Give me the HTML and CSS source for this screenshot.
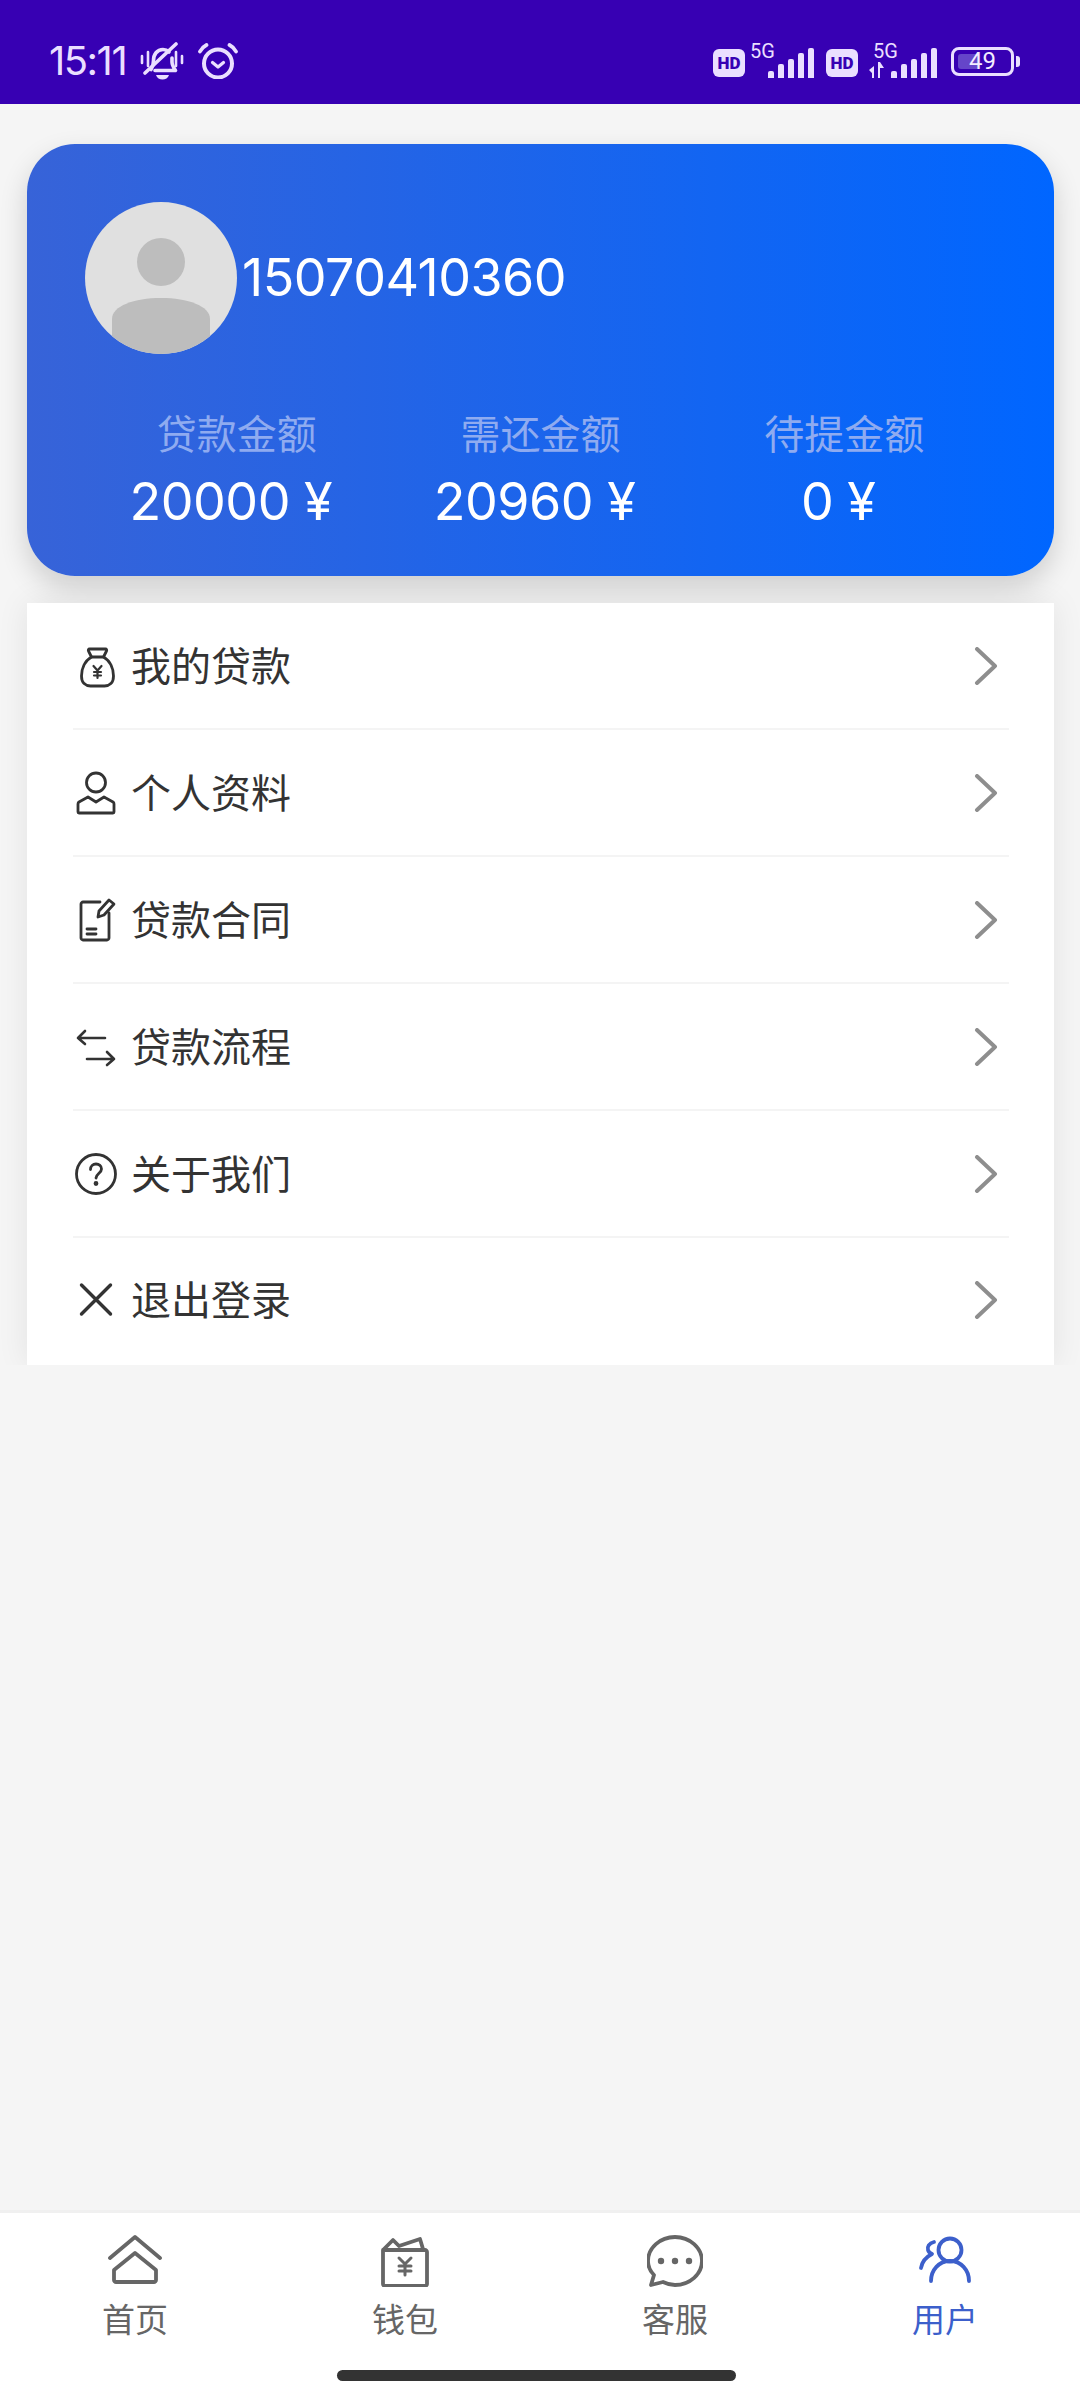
FILE: index.html
```html
<!DOCTYPE html>
<html lang="zh-CN">

<head>
  <meta charset="UTF-8">
  <meta name="viewport" content="width=device-width, initial-scale=1.0">
  <title>用户</title>
  <link rel="stylesheet" href="styles.css">
</head>

<body>

  <!-- status bar -->
  <header class="status-bar">
    <div class="status-left">
      <span class="time">15:11</span>
      <svg class="icon-bell" viewBox="0 0 44 38" fill="none" stroke="currentColor" stroke-width="3.6" stroke-linecap="round" stroke-linejoin="round">
        <path d="M11 27.5c2-3 2.5-5 2.5-9 0-6 3.5-11 9.5-11 2.5 0 4.500 1 6 2.500M32 16v4c0 3 1.500 5.500 3.500 8.500H15" />
        <path d="M5 31 36 2" />
        <path d="M2 14v7M8 10v14M36 10v14M42 14v7" stroke-width="2.6" />
        <path d="M16 33h13c-1 3-3.500 4.500-6.500 4.500s-5.500-1.500-6.500-4.500z" fill="currentColor" stroke="none" />
      </svg>
      <svg class="icon-alarm" viewBox="0 0 40 36" fill="none" stroke="currentColor" stroke-linecap="round" stroke-linejoin="round">
        <circle cx="20" cy="20.5" r="14" stroke-width="4" />
        <path d="M14.500 19.500 20 24l5.500-4.500" stroke-width="3.2" />
        <path d="M2 8.500C3.500 5.500 5.500 3.500 8.500 2M38 8.500C36.500 5.500 34.500 3.500 31.500 2" stroke-width="3.8" />
      </svg>
    </div>
    <div class="status-right">
      <span class="hd-badge">HD</span>
      <span class="net net-first">
        <span class="net-label">5G</span>
        <span class="signal">
          <i class="bar bar-1"></i><i class="bar bar-2"></i><i class="bar bar-3"></i><i class="bar bar-4"></i><i class="bar bar-5"></i>
        </span>
      </span>
      <span class="hd-badge">HD</span>
      <span class="net net-second">
        <span class="net-label">5G</span>
        <svg class="net-arrows" viewBox="0 0 15 16" fill="currentColor">
          <path d="M0 8l5-4v12H3V11zM9 0h2l4 6H11v10H9z" />
        </svg>
        <span class="signal">
          <i class="bar bar-1"></i><i class="bar bar-2"></i><i class="bar bar-3"></i><i class="bar bar-4"></i><i class="bar bar-5"></i>
        </span>
      </span>
      <span class="battery">
        <span class="battery-body">
          <span class="battery-level"></span>
          <span class="battery-text">49</span>
        </span>
        <span class="battery-cap"></span>
      </span>
    </div>
  </header>

  <main class="content">
    <!-- user card -->
    <section class="user-card">
      <div class="user-head">
        <svg class="avatar" viewBox="0 0 152 152">
          <defs>
            <clipPath id="avatarClip">
              <circle cx="76" cy="76" r="76" />
            </clipPath>
          </defs>
          <circle cx="76" cy="76" r="76" fill="#e0e0e0" />
          <g clip-path="url(#avatarClip)" fill="#bdbdbd">
            <ellipse cx="76" cy="60" rx="24" ry="24" />
            <path d="M27 152v-35c0-13 22-21 49-21s49 8 49 21v35z" />
          </g>
        </svg>
        <span class="phone">15070410360</span>
      </div>
      <div class="stats">
        <div class="stat">
          <span class="stat-label">贷款金额</span>
          <span class="stat-value">20000 ¥</span>
        </div>
        <div class="stat">
          <span class="stat-label">需还金额</span>
          <span class="stat-value">20960 ¥</span>
        </div>
        <div class="stat">
          <span class="stat-label">待提金额</span>
          <span class="stat-value">0 ¥</span>
        </div>
      </div>
    </section>

    <!-- menu -->
    <ul class="menu">
      <li class="menu-row">
        <svg class="menu-icon" viewBox="0 0 46 46" fill="none" stroke="#333" stroke-width="2.8" stroke-linecap="round" stroke-linejoin="round">
          <g transform="translate(1.5 2)">
            <path d="M15 4h16c1 0 1.500 1 1 2l-3 6H17l-3-6c-.5-1 0-2 1-2z" />
            <path d="M17 12C10 16 7 24 7 31c0 7 4 10 9 10h14c5 0 9-3 9-10 0-7-3-15-10-19" />
            <path d="M19 21l4 4.500 4-4.500M23 25.500V33M19.500 27h7M19.500 30.500h7" stroke-width="2.2" />
          </g>
        </svg>
        <span class="menu-text">我的贷款</span>
        <svg class="menu-arrow" viewBox="0 0 24 38" fill="none" stroke="#8e8e8e" stroke-width="4" stroke-linecap="round" stroke-linejoin="round">
          <path d="M3 2l18 17L3 36" />
        </svg>
      </li>
      <li class="menu-row">
        <svg class="menu-icon" viewBox="0 0 46 46" fill="none" stroke="#333" stroke-width="2.8" stroke-linecap="round" stroke-linejoin="round">
          <circle cx="23" cy="12.5" r="9.5" />
          <path d="M15 27 6 32c-.6.4-1 1-1 2v8c0 .6.4 1 1 1h34c.6 0 1-.4 1-1v-8c0-1-.4-1.600-1-2l-9-5-8 5z" />
        </svg>
        <span class="menu-text">个人资料</span>
        <svg class="menu-arrow" viewBox="0 0 24 38" fill="none" stroke="#8e8e8e" stroke-width="4" stroke-linecap="round" stroke-linejoin="round">
          <path d="M3 2l18 17L3 36" />
        </svg>
      </li>
      <li class="menu-row">
        <svg class="menu-icon" viewBox="0 0 46 46" fill="none" stroke="#333" stroke-width="2.8" stroke-linecap="round" stroke-linejoin="round">
          <path d="M27 5H10c-1 0-2 1-2 2v34c0 1 1 2 2 2h24c1 0 2-1 2-2V16" />
          <path d="M25 20l1-6L36 3l5 4-10 11z" />
          <path d="M14 32h9M14 37h9" />
        </svg>
        <span class="menu-text">贷款合同</span>
        <svg class="menu-arrow" viewBox="0 0 24 38" fill="none" stroke="#8e8e8e" stroke-width="4" stroke-linecap="round" stroke-linejoin="round">
          <path d="M3 2l18 17L3 36" />
        </svg>
      </li>
      <li class="menu-row">
        <svg class="menu-icon" viewBox="0 0 46 46" fill="none" stroke="#333" stroke-width="2.6" stroke-linecap="round" stroke-linejoin="round">
          <path d="M5 14h27M12 7l-7 7 7 6" />
          <path d="M14 35h27M34 28l7 7-7 6" />
        </svg>
        <span class="menu-text">贷款流程</span>
        <svg class="menu-arrow" viewBox="0 0 24 38" fill="none" stroke="#8e8e8e" stroke-width="4" stroke-linecap="round" stroke-linejoin="round">
          <path d="M3 2l18 17L3 36" />
        </svg>
      </li>
      <li class="menu-row">
        <svg class="menu-icon" viewBox="0 0 46 46" fill="none" stroke="#333" stroke-width="2.8" stroke-linecap="round" stroke-linejoin="round">
          <circle cx="23" cy="23" r="19.5" />
          <path d="M17.500 18.500c0-3.500 2.500-5.500 5.500-5.500s5.500 2 5.500 5c0 4-5 4.500-5.500 9" />
          <circle cx="23" cy="32.5" r="1" fill="#333" />
        </svg>
        <span class="menu-text">关于我们</span>
        <svg class="menu-arrow" viewBox="0 0 24 38" fill="none" stroke="#8e8e8e" stroke-width="4" stroke-linecap="round" stroke-linejoin="round">
          <path d="M3 2l18 17L3 36" />
        </svg>
      </li>
      <li class="menu-row">
        <svg class="menu-icon" viewBox="0 0 46 46" fill="none" stroke="#333" stroke-width="3.4" stroke-linecap="round" stroke-linejoin="round">
          <path d="M8.500 8 37.500 37M37.500 8 8.500 37" />
        </svg>
        <span class="menu-text">退出登录</span>
        <svg class="menu-arrow" viewBox="0 0 24 38" fill="none" stroke="#8e8e8e" stroke-width="4" stroke-linecap="round" stroke-linejoin="round">
          <path d="M3 2l18 17L3 36" />
        </svg>
      </li>
    </ul>
  </main>

  <!-- bottom tabs -->
  <nav class="tabbar">
    <a class="tab">
      <svg class="tab-icon" viewBox="0 0 56 52" fill="none" stroke="currentColor" stroke-width="3.8" stroke-linecap="round" stroke-linejoin="round">
        <path d="M3 23 28 2l25 21" />
        <path d="M7 35 28 18l21 17v10c0 1-1 2-2 2H9c-1 0-2-1-2-2z" />
      </svg>
      <span>首页</span>
    </a>
    <a class="tab">
      <svg class="tab-icon" viewBox="0 0 56 52" fill="none" stroke="currentColor" stroke-width="3.8" stroke-linecap="round" stroke-linejoin="round">
        <path d="M6 15h42c1 0 2 1 2 2v32c0 1-1 2-2 2H8c-1 0-2-1-2-2z" />
        <path d="M7 14l9-9 6 6 21-7 3 10" />
        <path d="M22 23l6 6 6-6M28 29v11M22 31h12M22 36h12" stroke-width="3" />
      </svg>
      <span>钱包</span>
    </a>
    <a class="tab">
      <svg class="tab-icon" viewBox="0 0 56 52" fill="none" stroke="currentColor" stroke-width="3.8" stroke-linecap="round" stroke-linejoin="round">
        <path d="M4 50l3-10C3 36 1 31 1 26 1 13 13 2 28 2s27 11 27 24-12 24-27 24c-4 0-8-1-12-3z" />
        <circle cx="14" cy="26" r="3.2" fill="currentColor" stroke="none" />
        <circle cx="28" cy="26" r="3.2" fill="currentColor" stroke="none" />
        <circle cx="42" cy="26" r="3.2" fill="currentColor" stroke="none" />
      </svg>
      <span>客服</span>
    </a>
    <a class="tab tab-on">
      <svg class="tab-icon" viewBox="0 0 56 52" fill="none" stroke="currentColor" stroke-width="3.8" stroke-linecap="round" stroke-linejoin="round">
        <circle cx="33" cy="15" r="11.5" />
        <path d="M14 46c0-11 8-20 19-20s19 9 19 20" />
        <path d="M17 7c-5 1-7 5-6 8 .5 2 2 3 4 4-6 3-10 8-11 14" />
      </svg>
      <span>用户</span>
    </a>
    <div class="home-bar"></div>
  </nav>

</body>

</html>
```

FILE: styles.css
```css
* {
  box-sizing: border-box;
}

html,
body {
  margin: 0;
  padding: 0;
}

body {
  width: 1080px;
  height: 2400px;
  display: flex;
  flex-direction: column;
  overflow: hidden;
  background: #f5f5f5;
  font-family: "Roboto", "Noto Sans CJK SC", sans-serif;
  color: #333;
}

ul,
li {
  list-style: none;
  margin: 0;
  padding: 0;
}

/* 状态栏 */
.status-bar {
  height: 104px;
  flex: none;
  padding: 18px 60px 0 49px;
  display: flex;
  justify-content: space-between;
  align-items: center;
  background: #3700b3;
  color: #eadfff;
}

.status-left {
  display: flex;
  align-items: center;
}

.time {
  width: 89px;
  font-family: "Inter", sans-serif;
  font-size: 40px;
  letter-spacing: -1.5px;
  line-height: 44px;
}

.icon-bell {
  width: 44px;
  height: 38px;
  margin-left: 2px;
}

.icon-alarm {
  width: 40px;
  height: 36px;
  margin-left: 14px;
}

.status-right {
  display: flex;
  align-items: center;
  height: 34px;
}

.hd-badge {
  width: 32px;
  height: 28px;
  margin-top: 3px;
  border-radius: 6px;
  background: #eadfff;
  color: #3700b3;
  font-size: 17px;
  font-weight: 900;
  line-height: 28px;
  text-align: center;
}

.net {
  position: relative;
  height: 34px;
  display: flex;
  align-items: flex-end;
  justify-content: flex-end;
}

.net-first {
  width: 69px;
  margin-right: 12px;
}

.net-second {
  width: 79px;
  margin-right: 14px;
}

.net-label {
  position: absolute;
  top: -4px;
  font-size: 20px;
  line-height: 22px;
}

.net-first .net-label {
  left: 5px;
}

.net-second .net-label {
  left: 15px;
}

.net-arrows {
  position: absolute;
  left: 11px;
  bottom: 0;
  width: 15px;
  height: 16px;
}

.signal {
  display: flex;
  align-items: flex-end;
  gap: 4px;
}

.bar {
  display: block;
  width: 6px;
  border-radius: 2px 2px 0 0;
  background: #eadfff;
}

.bar-1 {
  height: 7px;
}

.bar-2 {
  height: 14px;
}

.bar-3 {
  height: 19px;
}

.bar-4 {
  height: 25px;
}

.bar-5 {
  height: 30px;
}

.battery {
  display: flex;
  align-items: center;
}

.battery-body {
  position: relative;
  width: 63px;
  height: 29px;
  padding: 4px;
  border: 3px solid #eadfff;
  border-radius: 8px;
}

.battery-level {
  display: block;
  width: 21px;
  height: 100%;
  border-radius: 3px 0 0 3px;
  background: #6545c9;
}

.battery-text {
  position: absolute;
  top: 0;
  left: 0;
  width: 100%;
  color: #f3ecff;
  font-size: 24px;
  line-height: 23px;
  text-align: center;
}

.battery-cap {
  width: 4px;
  height: 11px;
  margin-left: 2px;
  border-radius: 0 3px 3px 0;
  background: #eadfff;
}

/* 内容 */
.content {
  flex: 1;
  padding: 40px 26px 0 27px;
}

.user-card {
  height: 432px;
  padding: 58px 58px 0;
  border-radius: 48px;
  background: linear-gradient(90deg, #3763d8 0%, #0066ff 100%);
  box-shadow: 0 12px 28px rgba(0, 0, 0, 0.16);
  color: #fff;
}

.user-head {
  display: flex;
  align-items: center;
}

.avatar {
  width: 152px;
  height: 152px;
  flex: none;
}

.phone {
  margin-left: 5px;
  font-family: "Inter", sans-serif;
  font-size: 52px;
  letter-spacing: -0.5px;
  line-height: 58px;
}

.stats {
  display: grid;
  grid-template-columns: repeat(3, 1fr);
  margin-top: 58px;
}

.stat {
  display: flex;
  flex-direction: column;
  align-items: center;
}

.stat-label {
  font-size: 40px;
  line-height: 48px;
  color: #8fabf0;
}

.stat-value {
  margin-top: 13px;
  margin-right: 12px;
  font-family: "Inter", sans-serif;
  font-size: 52px;
  letter-spacing: -0.5px;
  line-height: 58px;
}

/* 菜单 */
.menu {
  margin-top: 27px;
  padding: 0 45px 0 46px;
  background: #fff;
  box-shadow: 0 0 30px rgba(0, 0, 0, 0.08);
  clip-path: inset(-40px -40px 0 -40px);
}

.menu-row {
  height: 127px;
  display: flex;
  align-items: center;
  border-bottom: 2px solid #f4f4f4;
}

.menu-row:last-child {
  padding-bottom: 3px;
  border-bottom: none;
}

.menu-icon {
  width: 46px;
  height: 46px;
  flex: none;
}

.menu-text {
  flex: 1;
  margin-left: 12px;
  padding-top: 4px;
  font-size: 40px;
  line-height: 48px;
  color: #333;
}

.menu-arrow {
  width: 24px;
  height: 38px;
  margin-right: 11px;
}

/* 底部导航 */
.tabbar {
  position: relative;
  height: 190px;
  flex: none;
  padding-top: 22px;
  display: grid;
  grid-template-columns: repeat(4, 270px);
  align-items: start;
  background: #fff;
  border-top: 3px solid #f0f0f0;
}

.tab {
  display: flex;
  flex-direction: column;
  align-items: center;
  color: #666;
  font-size: 33px;
  line-height: 40px;
}

.tab-on {
  color: #3c5fcb;
}

.tab-icon {
  width: 56px;
  height: 52px;
  margin-bottom: 14px;
}

.home-bar {
  position: absolute;
  left: 337px;
  bottom: 19px;
  width: 399px;
  height: 11px;
  border-radius: 6px;
  background: #333;
}
```
